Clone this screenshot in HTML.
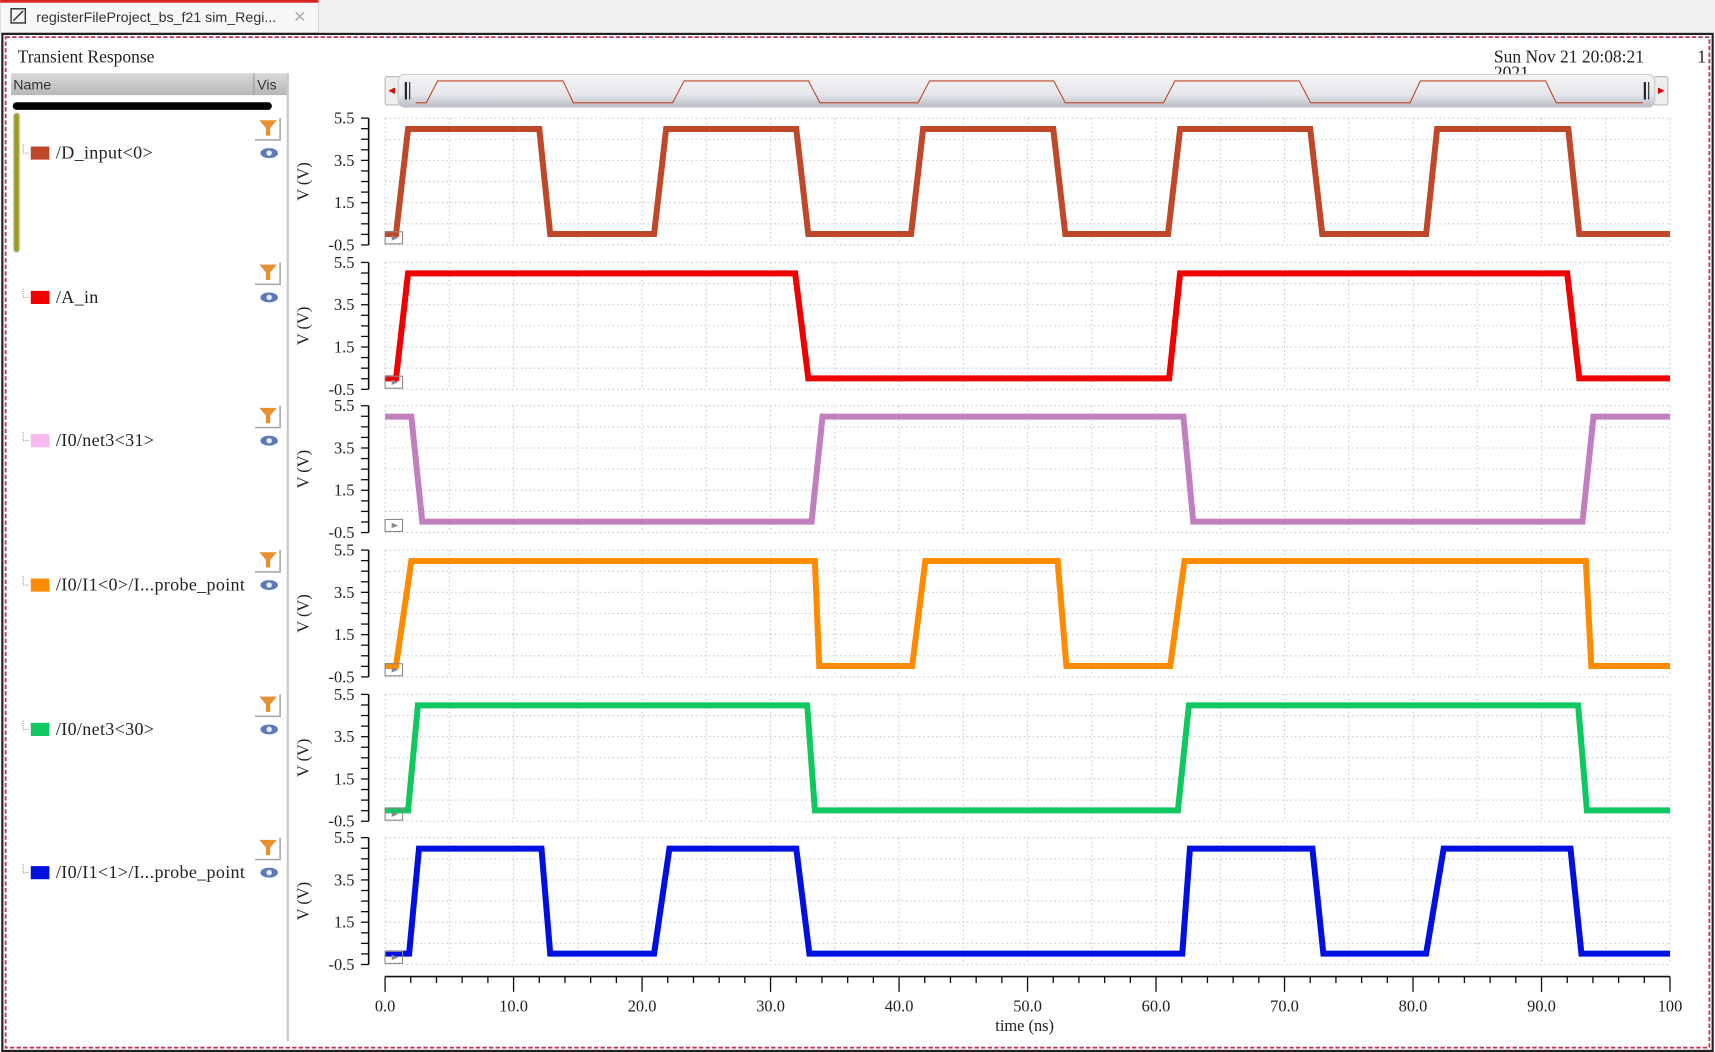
<!DOCTYPE html>
<html><head><meta charset="utf-8"><style>
html,body{margin:0;padding:0;background:#fff;width:1715px;height:1052px;overflow:hidden}
svg{display:block}
text{font-family:"Liberation Serif",serif;fill:#222}
</style></head><body>
<svg id="s" width="1715" height="1052" viewBox="0 0 1568 962" xmlns="http://www.w3.org/2000/svg">
<rect x="0" y="0" width="1568" height="962" fill="#fff"/>
<rect x="0" y="0" width="1568" height="30" fill="#f0f0f0"/>
<rect x="0" y="0" width="291" height="30" fill="#f7f7f7" stroke="#d8d8d8"/>
<rect x="0" y="0" width="291" height="2.5" fill="#d22"/>
<rect x="10" y="8" width="13" height="13" fill="none" stroke="#333" stroke-width="1.3"/>
<path d="M12 19 L21 10" stroke="#333" stroke-width="1.3"/>
<text x="33" y="20" style="font-family:'Liberation Sans',sans-serif;font-size:13px;fill:#333">registerFileProject_bs_f21 sim_Regi...</text>
<text x="268" y="20" style="font-family:'Liberation Sans',sans-serif;font-size:14px;fill:#aaa">✕</text>
<rect x="2" y="31" width="1564" height="930" fill="none" stroke="#222" stroke-width="2"/>
<rect x="5" y="34" width="1558" height="924" fill="none" stroke="#c03050" stroke-width="1.6" stroke-dasharray="4,2"/>
<text x="16" y="57" font-size="16">Transient Response</text>
<text x="1366" y="72" font-size="16" fill="#999">2021</text>
<text x="1366" y="57" font-size="16">Sun Nov 21 20:08:21</text>
<text x="1552" y="57" font-size="16">1</text>
<defs><linearGradient id="hg" x1="0" y1="0" x2="0" y2="1"><stop offset="0" stop-color="#d9d9d9"/><stop offset="1" stop-color="#b8b8b8"/></linearGradient>
<linearGradient id="sg" x1="0" y1="0" x2="0" y2="1"><stop offset="0" stop-color="#f4f4f6"/><stop offset=".6" stop-color="#e6e8ec"/><stop offset="1" stop-color="#b9bdc4"/></linearGradient></defs>
<rect x="10" y="67" width="253" height="20" fill="url(#hg)"/>
<line x1="232" y1="67" x2="232" y2="87" stroke="#999"/>
<text x="12" y="82" style="font-family:'Liberation Sans',sans-serif;font-size:13px;fill:#333">Name</text>
<text x="235" y="82" style="font-family:'Liberation Sans',sans-serif;font-size:13px;fill:#333">Vis</text>
<line x1="263" y1="67" x2="263" y2="952" stroke="#c8c8c8" stroke-width="2"/>
<line x1="15" y1="97" x2="245" y2="97" stroke="#000" stroke-width="7" stroke-linecap="round"/>
<line x1="15" y1="106" x2="15" y2="228" stroke="#223" stroke-width="6.5" stroke-linecap="round" opacity=".25"/>
<line x1="15" y1="106" x2="15" y2="228" stroke="#9aa010" stroke-width="4" stroke-linecap="round"/>
<g id="left"></g>
<g id="plot"></g>
<rect x="352" y="70" width="14" height="26" rx="2" fill="#eee" stroke="#bbb"/>
<path d="M355 83 L361 80 L361 86Z" fill="#d00"/>
<rect x="1512" y="70" width="13" height="26" rx="2" fill="#eee" stroke="#bbb"/>
<path d="M1522 83 L1516 80 L1516 86Z" fill="#d00"/>
<rect x="364" y="68" width="1149" height="30" rx="6" fill="url(#sg)" stroke="#c6c9ce"/>
<rect x="370" y="75" width="2" height="16" fill="#222"/><rect x="374" y="75" width="1" height="16" fill="#222"/>
<rect x="1503" y="75" width="2" height="16" fill="#222"/><rect x="1507" y="75" width="1" height="16" fill="#222"/>
<path id="mini" fill="none" stroke="#c0482a" stroke-width="1"/>
<text x="910" y="943" font-size="15">time (ns)</text>
</svg>
<script>
var NS="http://www.w3.org/2000/svg",P=document.getElementById('plot'),Lg=document.getElementById('left');
function el(t,a,p){var e=document.createElementNS(NS,t);for(var k in a)e.setAttribute(k,a[k]);(p||P).appendChild(e);return e}
var tops=[108,240,371,503,635,766];
var cols=['#c0482a','#f00000','#c080c0','#ff8c00','#10c860','#0010e0'];
var sw=['#c0482a','#f00000','#f8b8f0','#ff8c00','#10c860','#0010e0'];
var X0=352,X1=1527;
var W=[
[[352,0],[362,0],[373,1],[493,1],[503,0],[598,0],[609,1],[728,1],[739,0],[833,0],[844,1],[963,1],[974,0],[1068,0],[1079,1],[1198,1],[1209,0],[1304,0],[1314,1],[1434,1],[1444,0],[1527,0]],
[[352,0],[362,0],[373,1],[727,1],[739,0],[1069,0],[1079,1],[1433,1],[1444,0],[1527,0]],
[[352,1],[376,1],[386,0],[742,0],[752,1],[1082,1],[1091,0],[1447,0],[1457,1],[1527,1]],
[[352,0],[362,0],[376,1],[383,1],[745,1],[749,0],[834,0],[846,1],[850,1],[967,1],[975,0],[1070,0],[1083,1],[1090,1],[1450,1],[1455,0],[1527,0]],
[[352,0],[373,0],[382,1],[738,1],[745,0],[1077,0],[1087,1],[1443,1],[1451,0],[1527,0]],
[[352,0],[374,0],[383,1],[495,1],[503,0],[598,0],[612,1],[728,1],[740,0],[1081,0],[1088,1],[1200,1],[1210,0],[1304,0],[1320,1],[1436,1],[1446,0],[1527,0]]
];
var names=['/D_input<0>','/A_in','/I0/net3<31>','/I0/I1<0>/I...probe_point','/I0/net3<30>','/I0/I1<1>/I...probe_point'];
tops.forEach(function(T,i){
  var B=T+116;
  for(var v=0;v<=6;v++){var y=T+v*116/6;el('line',{x1:X0,y1:y,x2:X1,y2:y,stroke:'#ccc','stroke-dasharray':'1.5,2.5'})}
  for(var n=0;n<=20;n++){var x=X0+n*(X1-X0)/20;el('line',{x1:x,y1:T,x2:x,y2:B,stroke:'#ccc','stroke-dasharray':'1.5,2.5'})}
  el('line',{x1:337,y1:T,x2:337,y2:B,stroke:'#111','stroke-width':1.5});
  for(var k=0;k<=12;k++){var y=T+k*116/12;el('line',{x1:330,y1:y,x2:337,y2:y,stroke:'#111','stroke-width':1.2})}
  [['5.5',0],['3.5',1],['1.5',2],['-0.5',3]].forEach(function(a){var t=el('text',{x:324,y:T+a[1]*116/3+5,'font-size':15,'text-anchor':'end'});t.textContent=a[0]});
  var vt=el('text',{x:0,y:0,'font-size':15,'text-anchor':'middle',transform:'translate(282,'+(T+58)+') rotate(-90)'});vt.textContent='V (V)';
  var H=T+10,L=T+106,d='';
  W[i].forEach(function(p,j){d+=(j?'L':'M')+p[0]+' '+(p[1]?H:L)});
  el('path',{d:d,fill:'none',stroke:cols[i],'stroke-width':5.5,'stroke-linejoin':'miter'});
  el('rect',{x:352,y:B-12,width:16,height:11,fill:'none',stroke:'#888'});
  el('path',{d:'M358 '+(B-9)+' L364 '+(B-6.5)+' L358 '+(B-4)+'Z',fill:'#888'});
  var cy=T+32;
  el('path',{d:'M21 '+(cy-8)+' V'+cy+' H27',stroke:'#999','stroke-dasharray':'1,1',fill:'none'},Lg);
  el('rect',{x:28,y:cy-6,width:17,height:12,fill:sw[i]},Lg);
  var nt=el('text',{x:51,y:cy+5,'font-size':16.5,'letter-spacing':'0.3'},Lg);nt.textContent=names[i];
  el('path',{d:'M237 '+(T+2)+' H253 L247 '+(T+9)+' V'+(T+16)+' H243 V'+(T+9)+'Z',fill:'#e89030'},Lg);
  el('path',{d:'M233 '+(T+20)+' H256 V'+(T),fill:'none',stroke:'#aaa','stroke-width':1.5},Lg);
  el('ellipse',{cx:246,cy:T+32,rx:8,ry:4.5,fill:'#5a7ab8'},Lg);
  el('circle',{cx:246,cy:T+32,r:2.5,fill:'#e8eef8'},Lg);
});
var AY=893;
el('line',{x1:X0,y1:AY,x2:X1,y2:AY,stroke:'#111','stroke-width':1.5});
for(var n=0;n<=100;n+=2){var x=X0+n*(X1-X0)/100,len=(n%10==0)?14:6;el('line',{x1:x,y1:AY,x2:x,y2:AY+len,stroke:'#111','stroke-width':1.2})}
for(var n=0;n<=10;n++){var x=X0+n*(X1-X0)/10;var t=el('text',{x:x,y:925,'font-size':15,'text-anchor':'middle'});t.textContent=n==10?'100':(n*10)+'.0'}
var d='';W[0].forEach(function(p,j){var x=380+(p[0]-352)*0.955;d+=(j?'L':'M')+x.toFixed(1)+' '+(p[1]?74:94)});
document.getElementById('mini').setAttribute('d',d);
</script>
</body></html>
